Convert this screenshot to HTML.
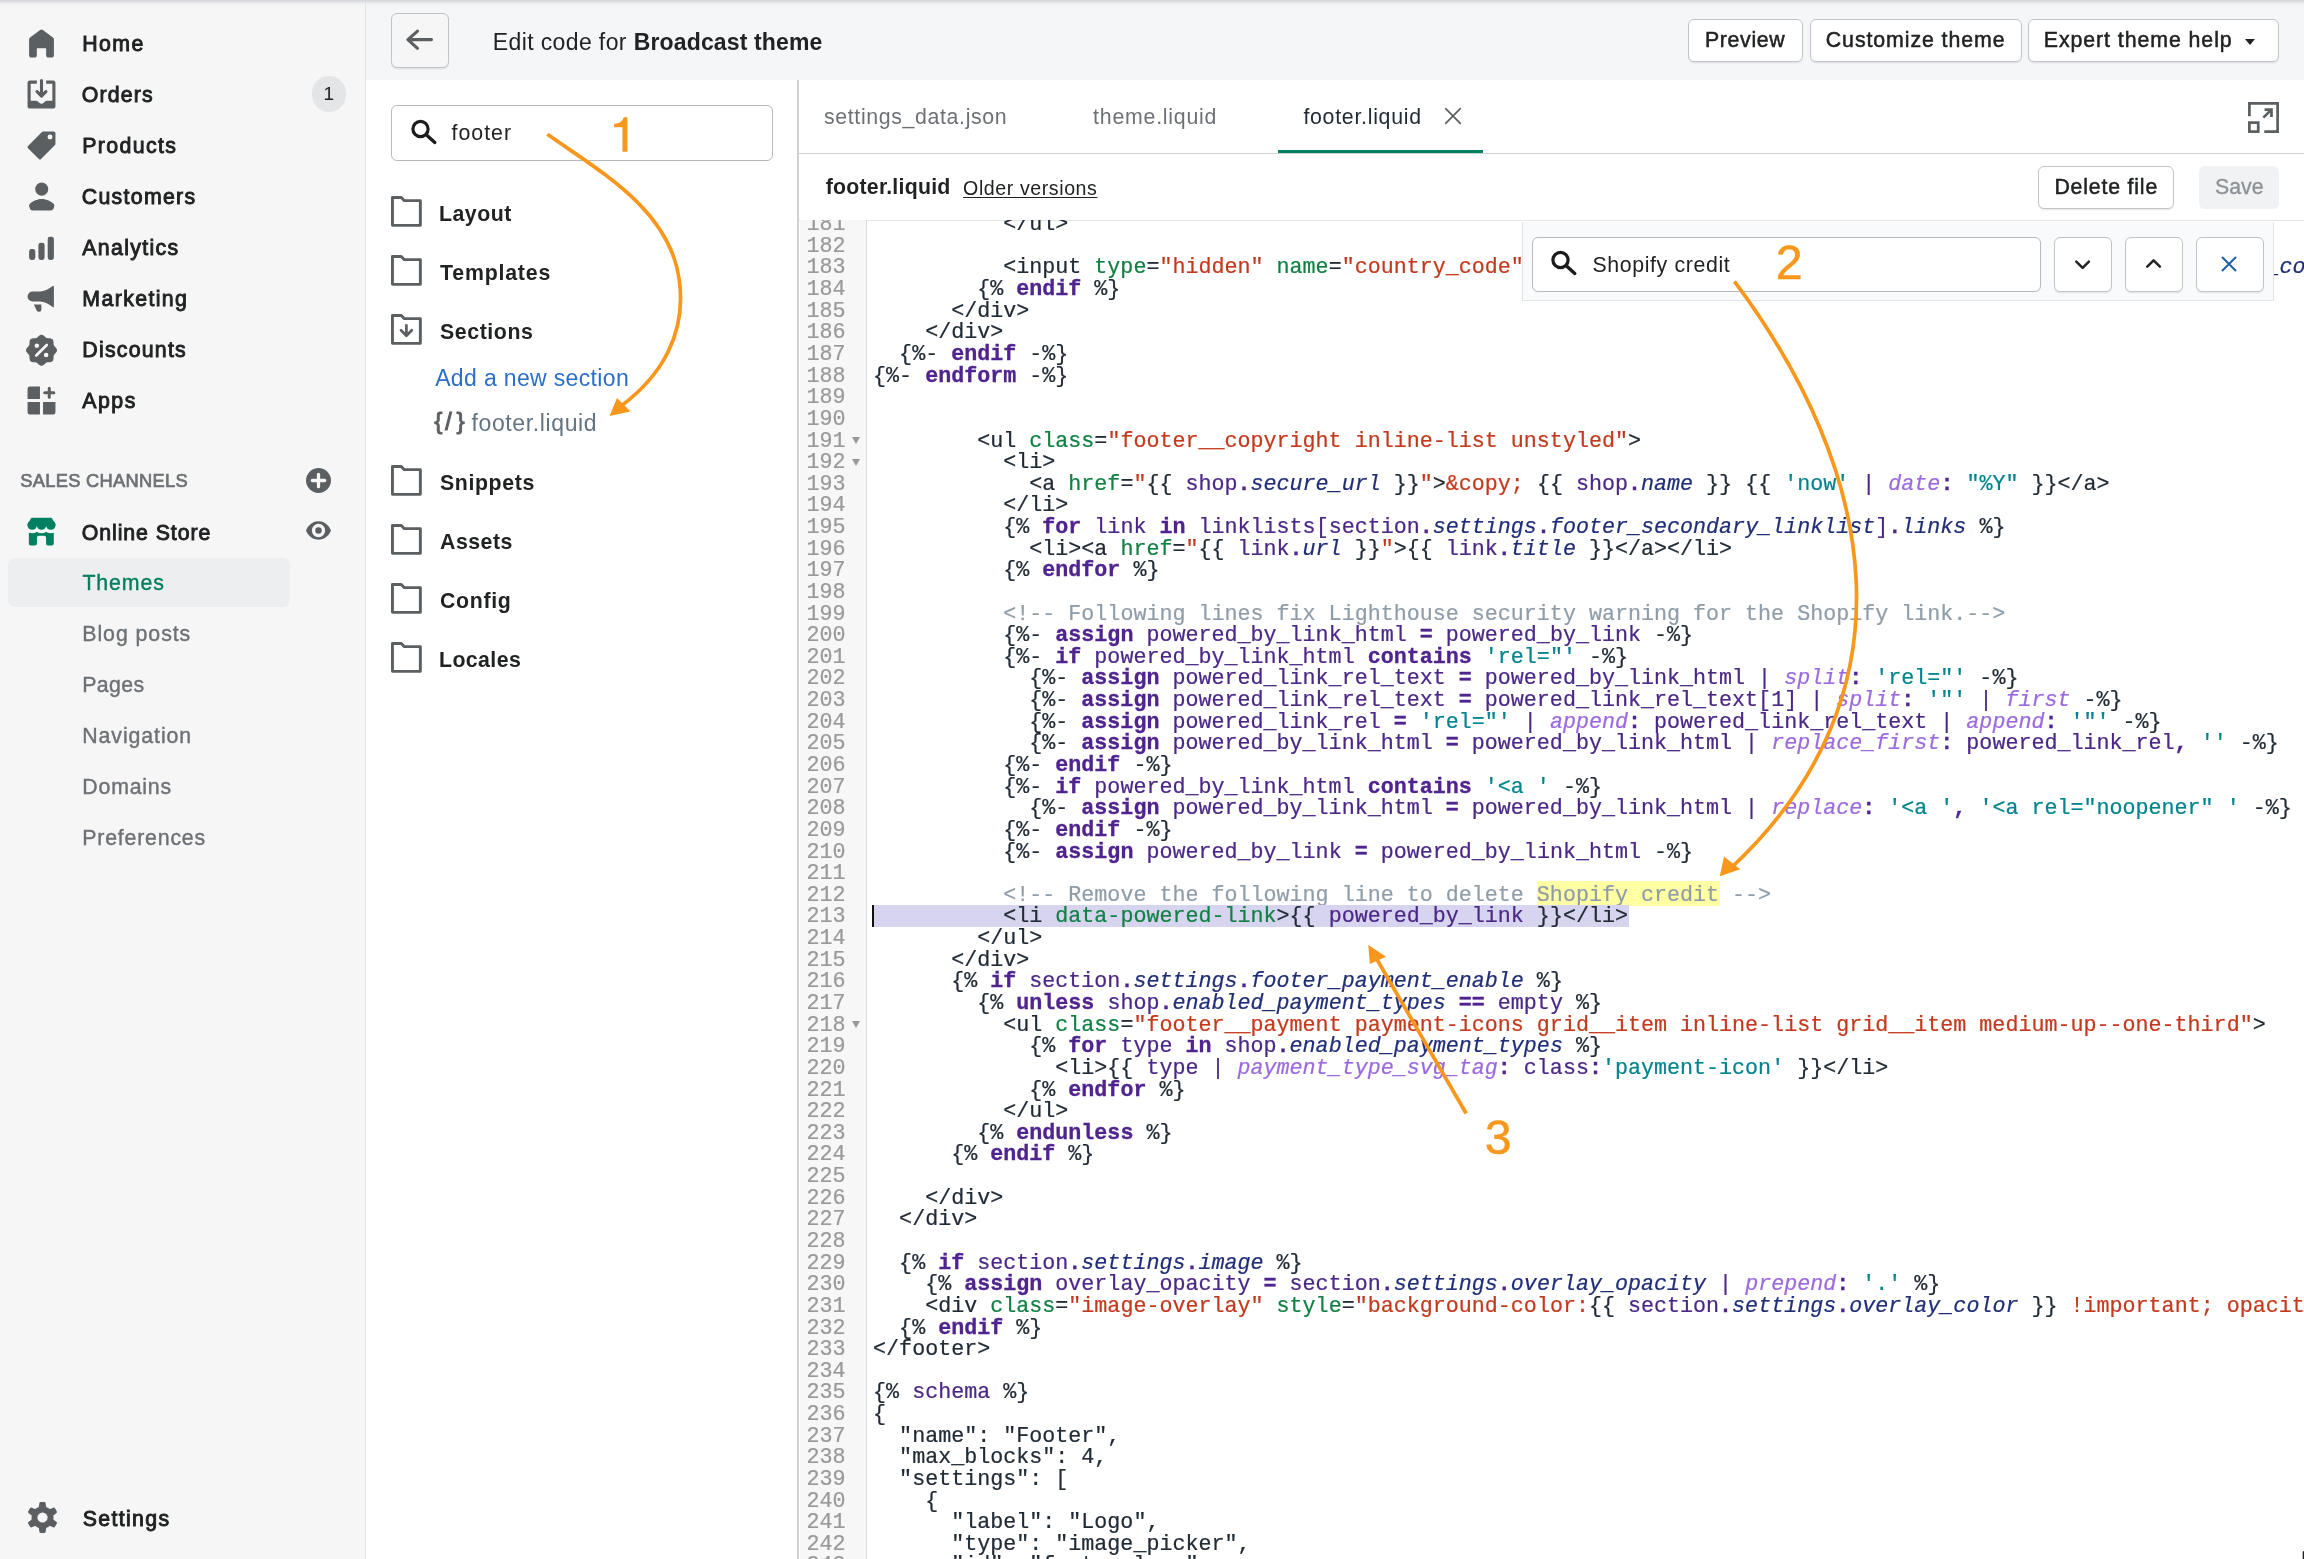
<!DOCTYPE html><html><head><meta charset="utf-8"><title>Edit code</title><style>
*{box-sizing:border-box;margin:0;padding:0}
html,body{width:2304px;height:1559px;overflow:hidden;background:#fff}
body{font-family:"Liberation Sans",sans-serif;color:#202223;position:relative}
#root{position:absolute;left:0;top:0;width:2304px;height:1559px;will-change:transform}
.abs{position:absolute}
.t{position:absolute;white-space:nowrap;line-height:1}
#nav{position:absolute;left:0;top:0;width:365px;height:1559px;background:#f6f6f7}
#navb{position:absolute;left:365px;top:0;width:1px;height:1559px;background:#e1e3e5}
.ic{position:absolute;left:26.3px;width:31px;height:31px}
#hdr{position:absolute;left:366px;top:0;width:1938px;height:80px;background:#f4f6f8}
#hdrs{position:absolute;left:0;top:0;width:2304px;height:5px;background:linear-gradient(#d3d4d7,rgba(222,223,226,.55) 55%,rgba(235,236,238,0))}
.btn{position:absolute;background:#fff;border:1.8px solid #c0c4c9;border-radius:6px;box-shadow:0 1.5px 0 rgba(0,0,0,.07)}
#fp{position:absolute;left:366px;top:80px;width:432px;height:1479px;background:#fff}
#fpb{position:absolute;left:797px;top:80px;width:1.5px;height:1479px;background:#cfd2d5}
.fo{position:absolute;left:391px;width:32px;height:32px}
#ed{position:absolute;left:799px;top:80px;width:1505px;height:1479px;background:#fff}
#gut{position:absolute;left:800px;top:220px;width:67px;height:1339px;background:#f7f7f7;border-right:1.5px solid #ddd}
#code{position:absolute;left:800px;top:220px;width:1504px;height:1339px;overflow:hidden;font-family:"Liberation Mono",monospace;font-size:21.7px;color:#212b36;-webkit-text-stroke:.22px}
.ln{position:absolute;left:0;height:21.6px;line-height:21.6px;white-space:pre}
.no{width:45.5px;text-align:right;color:#999}
.cl{left:73.1px}
#code i{font-style:normal}
#code i.k{color:#50248f;font-weight:bold;-webkit-text-stroke:.3px}
#code i.o{color:#50248f;font-weight:bold;-webkit-text-stroke:.3px}
#code i.p{color:#4b2787}
#code i.v{color:#4b2787}
#code i.r{color:#202e78;font-style:italic}
#code i.f{color:#9c6ade;font-style:italic}
#code i.s{color:#00848e}
#code i.n{color:#108043}
#code i.a{color:#c4391d}
#code i.c{color:#8f9da9}
#code i.m{background:none}
.fa{position:absolute;left:52.3px;width:0;height:0;border-left:4.2px solid transparent;border-right:4.2px solid transparent;border-top:7.6px solid #999}
</style></head><body><div id="root">
<div id="nav"></div><div id="navb"></div>
<div class="ic" style="top:27.6px"><svg viewBox="0 0 20 20" width="100%" height="100%" style="display:block;overflow:visible" ><path fill="#5c5f62" d="M18 7.26V17.5c0 .83-.67 1.5-1.5 1.5h-2c-.83 0-1.5-.67-1.5-1.5V13H7v4.5C7 18.33 6.33 19 5.5 19h-2C2.67 19 2 18.33 2 17.5V7.26c0-.48.23-.93.62-1.21l6.5-4.76a1.5 1.5 0 0 1 1.76 0l6.5 4.76c.39.28.62.73.62 1.21z"/></svg></div>
<div class="t" style="left:82.30px;top:33.87px;font-size:21.3px;letter-spacing:1.378px;color:#202223;-webkit-text-stroke:0.9px #202223;">Home</div>
<div class="ic" style="top:78.6px"><svg viewBox="0 0 20 20" width="100%" height="100%" style="display:block;overflow:visible" ><path fill="#5c5f62" d="M11 1a1 1 0 1 0-2 0v7.59L7.7 7.3a1 1 0 0 0-1.4 1.4l3 3a1 1 0 0 0 1.4 0l3-3a1 1 0 0 0-1.4-1.4L11 8.59V1z"/><path fill="#5c5f62" d="M3 14V3h4V1H2.5C1.67 1 1 1.67 1 2.5v15c0 .83.67 1.5 1.5 1.5h15c.83 0 1.5-.67 1.5-1.5v-15c0-.83-.67-1.5-1.5-1.5H13v2h4v11h-3.5c-.78 0-1.39.66-1.93 1.24l-.11.12c-.36.4-.88.64-1.46.64s-1.1-.25-1.46-.64l-.11-.12C7.89 14.66 7.28 14 6.5 14H3z"/></svg></div>
<div class="t" style="left:81.80px;top:84.87px;font-size:21.3px;letter-spacing:1.172px;color:#202223;-webkit-text-stroke:0.9px #202223;">Orders</div>
<div class="ic" style="top:129.6px"><svg viewBox="0 0 20 20" width="100%" height="100%" style="display:block;overflow:visible" ><path fill="#5c5f62" fill-rule="evenodd" d="M10.3 1.3A1 1 0 0 1 11 1h7a1 1 0 0 1 1 1v7a1 1 0 0 1-.3.7l-9 9a1 1 0 0 1-1.4 0l-7-7a1 1 0 0 1 0-1.4l9-9zM15.5 6.1a1.6 1.6 0 1 0 0-3.2 1.6 1.6 0 0 0 0 3.2z"/></svg></div>
<div class="t" style="left:82.30px;top:135.87px;font-size:21.3px;letter-spacing:1.372px;color:#202223;-webkit-text-stroke:0.9px #202223;">Products</div>
<div class="ic" style="top:180.6px"><svg viewBox="0 0 20 20" width="100%" height="100%" style="display:block;overflow:visible" ><path fill="#5c5f62" d="M14.36 5.22a4.22 4.22 0 1 1-8.44 0 4.22 4.22 0 0 1 8.44 0zM2.67 14.47c1.39-1.09 4.14-2.85 7.47-2.85s6.09 1.76 7.47 2.85c.62.49.81 1.31.57 2.06l-.33 1.02A2.11 2.11 0 0 1 15.85 19H4.44c-.91 0-1.72-.59-2-1.45l-.34-1.02c-.24-.75-.05-1.57.57-2.06z"/></svg></div>
<div class="t" style="left:81.80px;top:186.87px;font-size:21.3px;letter-spacing:1.299px;color:#202223;-webkit-text-stroke:0.9px #202223;">Customers</div>
<div class="ic" style="top:231.6px"><svg viewBox="0 0 20 20" width="100%" height="100%" style="display:block;overflow:visible" ><path fill="#5c5f62" d="M15.5 3A1.5 1.5 0 0 0 14 4.5v12a1.5 1.5 0 0 0 1.5 1.5h1a1.5 1.5 0 0 0 1.5-1.5v-12A1.5 1.5 0 0 0 16.5 3h-1zM8 8.5A1.5 1.5 0 0 1 9.5 7h1A1.5 1.5 0 0 1 12 8.500v8a1.5 1.5 0 0 1-1.5 1.5h-1A1.5 1.5 0 0 1 8 16.5v-8zm-6 4A1.5 1.500 0 0 1 3.500 11h1A1.5 1.5 0 0 1 6 12.5v4A1.5 1.5 0 0 1 4.500 18h-1A1.5 1.5 0 0 1 2 16.5v-4z"/></svg></div>
<div class="t" style="left:82.30px;top:237.87px;font-size:21.3px;letter-spacing:1.316px;color:#202223;-webkit-text-stroke:0.9px #202223;">Analytics</div>
<div class="ic" style="top:282.6px"><svg viewBox="0 0 20 20" width="100%" height="100%" style="display:block;overflow:visible" ><path fill="#5c5f62" d="M1 8.75A3.25 3.25 0 0 1 4.25 5.5H9.2c2.3 0 5.3-1.500 8-3.500.4-.3.8-.1.8.4v12.700c0 .5-.4.7-.8.4-2.700-2-5.700-3.500-8-3.500H4.250A3.250 3.250 0 0 1 1 8.750z"/><path fill="#5c5f62" d="M5.100 13.800h4.800v3.500a1.300 1.300 0 0 1-1.300 1.300h-.5a1.300 1.300 0 0 1-1.150-.7z"/></svg></div>
<div class="t" style="left:82.30px;top:288.87px;font-size:21.3px;letter-spacing:1.392px;color:#202223;-webkit-text-stroke:0.9px #202223;">Marketing</div>
<div class="ic" style="top:333.6px"><svg viewBox="0 0 20 20" width="100%" height="100%" style="display:block;overflow:visible" ><path fill="#5c5f62" d="M10.00,0.50 L10.39,0.54 L10.77,0.66 L11.14,0.86 L11.49,1.10 L11.81,1.38 L12.12,1.67 L12.41,1.95 L12.70,2.19 L12.99,2.40 L13.29,2.55 L13.61,2.66 L13.97,2.72 L14.34,2.74 L14.75,2.75 L15.17,2.77 L15.59,2.80 L16.01,2.87 L16.41,3.00 L16.76,3.18 L17.07,3.43 L17.32,3.74 L17.50,4.09 L17.63,4.49 L17.70,4.91 L17.73,5.33 L17.75,5.75 L17.76,6.16 L17.78,6.53 L17.84,6.89 L17.95,7.21 L18.10,7.51 L18.31,7.80 L18.55,8.09 L18.83,8.38 L19.12,8.69 L19.40,9.01 L19.64,9.36 L19.84,9.73 L19.96,10.11 L20.00,10.50 L19.96,10.89 L19.84,11.27 L19.64,11.64 L19.40,11.99 L19.12,12.31 L18.83,12.62 L18.55,12.91 L18.31,13.20 L18.10,13.49 L17.95,13.79 L17.84,14.11 L17.78,14.47 L17.76,14.84 L17.75,15.25 L17.73,15.67 L17.70,16.09 L17.63,16.51 L17.50,16.91 L17.32,17.26 L17.07,17.57 L16.76,17.82 L16.41,18.00 L16.01,18.13 L15.59,18.20 L15.17,18.23 L14.75,18.25 L14.34,18.26 L13.97,18.28 L13.61,18.34 L13.29,18.45 L12.99,18.60 L12.70,18.81 L12.41,19.05 L12.12,19.33 L11.81,19.62 L11.49,19.90 L11.14,20.14 L10.77,20.34 L10.39,20.46 L10.00,20.50 L9.61,20.46 L9.23,20.34 L8.86,20.14 L8.51,19.90 L8.19,19.62 L7.88,19.33 L7.59,19.05 L7.30,18.81 L7.01,18.60 L6.71,18.45 L6.39,18.34 L6.03,18.28 L5.66,18.26 L5.25,18.25 L4.83,18.23 L4.41,18.20 L3.99,18.13 L3.59,18.00 L3.24,17.82 L2.93,17.57 L2.68,17.26 L2.50,16.91 L2.37,16.51 L2.30,16.09 L2.27,15.67 L2.25,15.25 L2.24,14.84 L2.22,14.47 L2.16,14.11 L2.05,13.79 L1.90,13.49 L1.69,13.20 L1.45,12.91 L1.17,12.62 L0.88,12.31 L0.60,11.99 L0.36,11.64 L0.16,11.27 L0.04,10.89 L0.00,10.50 L0.04,10.11 L0.16,9.73 L0.36,9.36 L0.60,9.01 L0.88,8.69 L1.17,8.38 L1.45,8.09 L1.69,7.80 L1.90,7.51 L2.05,7.21 L2.16,6.89 L2.22,6.53 L2.24,6.16 L2.25,5.75 L2.27,5.33 L2.30,4.91 L2.37,4.49 L2.50,4.09 L2.68,3.74 L2.93,3.43 L3.24,3.18 L3.59,3.00 L3.99,2.87 L4.41,2.80 L4.83,2.77 L5.25,2.75 L5.66,2.74 L6.03,2.72 L6.39,2.66 L6.71,2.55 L7.01,2.40 L7.30,2.19 L7.59,1.95 L7.88,1.67 L8.19,1.38 L8.51,1.10 L8.86,0.86 L9.23,0.66 L9.61,0.54Z"/><path d="M6.600 13.900L13.400 7.100" stroke="#f6f6f7" stroke-width="1.700" stroke-linecap="round"/><circle cx="7" cy="7.500" r="1.450" fill="#f6f6f7"/><circle cx="13" cy="13.500" r="1.450" fill="#f6f6f7"/></svg></div>
<div class="t" style="left:82.30px;top:339.87px;font-size:21.3px;letter-spacing:1.243px;color:#202223;-webkit-text-stroke:0.9px #202223;">Discounts</div>
<div class="ic" style="top:384.9px"><svg viewBox="0 0 20 20" width="100%" height="100%" style="display:block;overflow:visible" ><path fill="#5c5f62" d="M2.500 1H9v8H1V2.500A1.500 1.500 0 0 1 2.500 1zM1 11h8v8H2.500A1.500 1.500 0 0 1 1 17.500zM11 11h8v6.500a1.500 1.500 0 0 1-1.500 1.500H11z"/><path d="M15 2.050v5.900M12.050 5h5.900" stroke="#5c5f62" stroke-width="1.950" stroke-linecap="round"/></svg></div>
<div class="t" style="left:82.30px;top:390.87px;font-size:21.3px;letter-spacing:1.502px;color:#202223;-webkit-text-stroke:0.9px #202223;">Apps</div>
<div class="abs" style="left:312px;top:76px;width:34px;height:36px;border-radius:17px;background:#e4e5e7"></div>
<div class="t" style="left:323.40px;top:84.42px;font-size:19px;color:#202223;">1</div>
<div class="t" style="left:20.20px;top:471.71px;font-size:18.3px;letter-spacing:0.301px;color:#6d7175;-webkit-text-stroke:0.7px #6d7175;">SALES CHANNELS</div>
<div class="abs" style="left:303px;top:465px;width:31px;height:31px"><svg viewBox="0 0 20 20" width="100%" height="100%" style="display:block;overflow:visible" ><circle cx="10" cy="10" r="8.050" fill="#5c5f62"/><path d="M10 6v8M6 10h8" stroke="#f6f6f7" stroke-width="2.100" stroke-linecap="round"/></svg></div>
<div class="ic" style="top:516.1px"><svg viewBox="0 0 20 20" width="100%" height="100%" style="display:block;overflow:visible" ><path fill="#008060" d="M1.830 8H17.920V17.700a1.300 1.300 0 0 1-1.300 1.300H14.200a1.250 1.250 0 0 1-1.250-1.250V14.100a1.350 1.350 0 0 0-1.350-1.350H8.400a1.350 1.350 0 0 0-1.350 1.350V17.750a1.250 1.250 0 0 1-1.250 1.250H3.130a1.300 1.300 0 0 1-1.300-1.300Z"/><g fill="#f6f6f7"><circle cx="4" cy="5.830" r="5.370"/><circle cx="10" cy="5.830" r="5.370"/><circle cx="16" cy="5.830" r="5.370"/></g><path fill="#008060" d="M3.900 1.100H16.100q.5 0 .750.450L19.100 5.830H.900L3.150 1.550Q3.400 1.100 3.900 1.100z"/><g fill="#008060"><circle cx="4" cy="5.830" r="3.100"/><circle cx="10" cy="5.830" r="3.100"/><circle cx="16" cy="5.830" r="3.100"/></g></svg></div>
<div class="t" style="left:81.80px;top:522.57px;font-size:21.3px;letter-spacing:0.915px;color:#202223;-webkit-text-stroke:0.9px #202223;">Online Store</div>
<div class="abs" style="left:303px;top:514.5px;width:31px;height:31px"><svg viewBox="0 0 20 20" width="100%" height="100%" style="display:block;overflow:visible" ><path fill="#5c5f62" fill-rule="evenodd" d="M17.930 9.630C17.840 9.400 15.610 4 10 4S2.160 9.400 2.070 9.630a1 1 0 0 0 0 .74C2.160 10.600 4.390 16 10 16s7.840-5.400 7.930-5.630a1 1 0 0 0 0-.74zM10 14.300a4.300 4.300 0 1 1 0-8.600 4.300 4.300 0 0 1 0 8.600zM10 7.900a2.100 2.100 0 1 0 0 4.200 2.100 2.100 0 0 0 0-4.200z"/></svg></div>
<div class="abs" style="left:8px;top:558px;width:282px;height:49px;border-radius:7px;background:#edeeef"></div>
<div class="t" style="left:82.40px;top:573.37px;font-size:21.3px;letter-spacing:0.904px;color:#007f5f;-webkit-text-stroke:0.4px #007f5f;">Themes</div>
<div class="t" style="left:82.30px;top:624.37px;font-size:21.3px;letter-spacing:0.945px;color:#6d7175;-webkit-text-stroke:0.4px #6d7175;">Blog posts</div>
<div class="t" style="left:82.30px;top:675.37px;font-size:21.3px;letter-spacing:0.341px;color:#6d7175;-webkit-text-stroke:0.4px #6d7175;">Pages</div>
<div class="t" style="left:82.30px;top:726.37px;font-size:21.3px;letter-spacing:0.913px;color:#6d7175;-webkit-text-stroke:0.4px #6d7175;">Navigation</div>
<div class="t" style="left:82.30px;top:777.37px;font-size:21.3px;letter-spacing:0.803px;color:#6d7175;-webkit-text-stroke:0.4px #6d7175;">Domains</div>
<div class="t" style="left:82.30px;top:828.37px;font-size:21.3px;letter-spacing:0.802px;color:#6d7175;-webkit-text-stroke:0.4px #6d7175;">Preferences</div>
<div class="ic" style="top:1502px;left:26.8px"><svg viewBox="0 0 20 20" width="100%" height="100%" style="display:block;overflow:visible" ><circle cx="10" cy="10" r="7.1" fill="#5c5f62"/><path transform="rotate(0 10 10)" d="M7.95 .9Q8 .05 8.85 .05H11.15Q12 .05 12.05 .9L12.6 5H7.4Z" fill="#5c5f62"/><path transform="rotate(60 10 10)" d="M7.95 .9Q8 .05 8.85 .05H11.15Q12 .05 12.05 .9L12.6 5H7.4Z" fill="#5c5f62"/><path transform="rotate(120 10 10)" d="M7.95 .9Q8 .05 8.85 .05H11.15Q12 .05 12.05 .9L12.6 5H7.4Z" fill="#5c5f62"/><path transform="rotate(180 10 10)" d="M7.95 .9Q8 .05 8.85 .05H11.15Q12 .05 12.05 .9L12.6 5H7.4Z" fill="#5c5f62"/><path transform="rotate(240 10 10)" d="M7.95 .9Q8 .05 8.85 .05H11.15Q12 .05 12.05 .9L12.6 5H7.4Z" fill="#5c5f62"/><path transform="rotate(300 10 10)" d="M7.95 .9Q8 .05 8.85 .05H11.15Q12 .05 12.05 .9L12.6 5H7.4Z" fill="#5c5f62"/><circle cx="10" cy="10" r="3.3" fill="#f6f6f7"/></svg></div>
<div class="t" style="left:82.70px;top:1508.57px;font-size:21.3px;letter-spacing:1.342px;color:#202223;-webkit-text-stroke:0.9px #202223;">Settings</div>
<div id="hdr"></div>
<div class="btn" style="left:391px;top:13px;width:58px;height:55px;background:#f6f6f7"><svg width="58" height="55" viewBox="0 0 58 55" style="display:block;overflow:visible"><path d="M17.400 27.100H41M27 18.600L17.400 27.100L27 35.800" fill="none" stroke="#5c5f62" stroke-width="3.100" stroke-linecap="round" stroke-linejoin="round" transform="translate(-1.500 -1.500)"/></svg></div>
<div class="t" style="left:492.80px;top:30.83px;font-size:23px;letter-spacing:0.378px;color:#202223;">Edit code for</div>
<div class="t" style="left:633.70px;top:30.83px;font-size:23px;font-weight:bold;letter-spacing:0.148px;color:#202223;">Broadcast theme</div>
<div class="btn" style="left:1688px;top:19px;width:115px;height:43px"></div>
<div class="t" style="left:1705.00px;top:30.37px;font-size:21.3px;letter-spacing:0.656px;color:#202223;-webkit-text-stroke:0.5px #202223;">Preview</div>
<div class="btn" style="left:1810px;top:19px;width:212px;height:43px"></div>
<div class="t" style="left:1825.80px;top:30.37px;font-size:21.3px;letter-spacing:0.931px;color:#202223;-webkit-text-stroke:0.5px #202223;">Customize theme</div>
<div class="btn" style="left:2028px;top:19px;width:251px;height:43px"></div>
<div class="t" style="left:2043.80px;top:30.37px;font-size:21.3px;letter-spacing:0.938px;color:#202223;-webkit-text-stroke:0.5px #202223;">Expert theme help</div>
<div class="abs" style="left:2244.5px;top:38.5px;width:0;height:0;border-left:5.2px solid transparent;border-right:5.2px solid transparent;border-top:6.2px solid #202223"></div>
<div id="fp"></div><div id="fpb"></div>
<div class="abs" style="left:391px;top:105px;width:382px;height:56px;border:1.5px solid #b5babf;border-radius:6px;background:#fff"></div>
<div class="abs" style="left:405px;top:114px;width:36px;height:36px"><svg width="36" height="36" viewBox="0 0 36 36" style="display:block;overflow:visible"><circle cx="15.500" cy="15" r="7.600" fill="none" stroke="#1a1c1d" stroke-width="3.200"/><path d="M21.500 21L29.800 28.400" stroke="#1a1c1d" stroke-width="3.400" stroke-linecap="round"/></svg></div>
<div class="t" style="left:451.60px;top:123.37px;font-size:21.3px;letter-spacing:0.987px;color:#202223;">footer</div>
<div class="fo" style="top:196.2px"><svg width="32" height="32" viewBox="0 0 32 32" style="display:block;overflow:visible"><path d="M1.450 1.450H10.300L13.300 4.650H29.350V29.350H1.450Z" fill="none" stroke="#5c5f62" stroke-width="2.900" stroke-linejoin="round"/></svg></div>
<div class="t" style="left:439.00px;top:204.17px;font-size:21.3px;font-weight:bold;letter-spacing:0.497px;color:#202223;">Layout</div>
<div class="fo" style="top:255px"><svg width="32" height="32" viewBox="0 0 32 32" style="display:block;overflow:visible"><path d="M1.450 1.450H10.300L13.300 4.650H29.350V29.350H1.450Z" fill="none" stroke="#5c5f62" stroke-width="2.900" stroke-linejoin="round"/></svg></div>
<div class="t" style="left:440.00px;top:262.97px;font-size:21.3px;font-weight:bold;letter-spacing:0.811px;color:#202223;">Templates</div>
<div class="fo" style="top:313.8px"><svg width="32" height="32" viewBox="0 0 32 32" style="display:block;overflow:visible"><path d="M1.450 1.450H10.300L13.300 4.650H29.350V29.350H1.450Z" fill="none" stroke="#5c5f62" stroke-width="2.900" stroke-linejoin="round"/><path d="M15.400 11.300V21.300M10 16.300L15.400 21.700L20.800 16.300" fill="none" stroke="#5c5f62" stroke-width="2.700" stroke-linecap="round" stroke-linejoin="round"/></svg></div>
<div class="t" style="left:440.00px;top:321.77px;font-size:21.3px;font-weight:bold;letter-spacing:0.583px;color:#202223;">Sections</div>
<div class="fo" style="top:465.2px"><svg width="32" height="32" viewBox="0 0 32 32" style="display:block;overflow:visible"><path d="M1.450 1.450H10.300L13.300 4.650H29.350V29.350H1.450Z" fill="none" stroke="#5c5f62" stroke-width="2.900" stroke-linejoin="round"/></svg></div>
<div class="t" style="left:440.00px;top:473.17px;font-size:21.3px;font-weight:bold;letter-spacing:0.616px;color:#202223;">Snippets</div>
<div class="fo" style="top:524px"><svg width="32" height="32" viewBox="0 0 32 32" style="display:block;overflow:visible"><path d="M1.450 1.450H10.300L13.300 4.650H29.350V29.350H1.450Z" fill="none" stroke="#5c5f62" stroke-width="2.900" stroke-linejoin="round"/></svg></div>
<div class="t" style="left:440.00px;top:531.97px;font-size:21.3px;font-weight:bold;letter-spacing:0.499px;color:#202223;">Assets</div>
<div class="fo" style="top:582.8px"><svg width="32" height="32" viewBox="0 0 32 32" style="display:block;overflow:visible"><path d="M1.450 1.450H10.300L13.300 4.650H29.350V29.350H1.450Z" fill="none" stroke="#5c5f62" stroke-width="2.900" stroke-linejoin="round"/></svg></div>
<div class="t" style="left:440.00px;top:590.77px;font-size:21.3px;font-weight:bold;letter-spacing:0.679px;color:#202223;">Config</div>
<div class="fo" style="top:641.6px"><svg width="32" height="32" viewBox="0 0 32 32" style="display:block;overflow:visible"><path d="M1.450 1.450H10.300L13.300 4.650H29.350V29.350H1.450Z" fill="none" stroke="#5c5f62" stroke-width="2.900" stroke-linejoin="round"/></svg></div>
<div class="t" style="left:439.00px;top:649.57px;font-size:21.3px;font-weight:bold;letter-spacing:0.405px;color:#202223;">Locales</div>
<div class="t" style="left:435.20px;top:366.63px;font-size:23px;letter-spacing:0.346px;color:#2c6ecb;">Add a new section</div>
<div class="t" style="left:434.20px;top:408.56px;font-size:24.5px;color:#5c5f62;-webkit-text-stroke:0.9px #5c5f62;">{</div>
<div class="t" style="left:445.30px;top:410.73px;font-size:23px;color:#5c5f62;-webkit-text-stroke:1.1px #5c5f62;">/</div>
<div class="t" style="left:456.50px;top:408.56px;font-size:24.5px;color:#5c5f62;-webkit-text-stroke:0.9px #5c5f62;">}</div>
<div class="t" style="left:471.50px;top:411.93px;font-size:23px;letter-spacing:0.621px;color:#637381;">footer.liquid</div>
<div id="ed"></div>
<div class="t" style="left:824.00px;top:107.17px;font-size:21.3px;letter-spacing:0.645px;color:#6d7175;">settings_data.json</div>
<div class="t" style="left:1093.10px;top:107.17px;font-size:21.3px;letter-spacing:0.774px;color:#6d7175;">theme.liquid</div>
<div class="t" style="left:1303.40px;top:107.17px;font-size:21.3px;letter-spacing:0.726px;color:#212b36;">footer.liquid</div>
<div class="abs" style="left:1443.7px;top:107px;width:18px;height:18px"><svg width="18" height="18" viewBox="0 0 18 18" style="display:block;overflow:visible"><path d="M1.700 1.700L16.300 16.300M16.300 1.700L1.700 16.300" stroke="#5c5f62" stroke-width="1.700" stroke-linecap="round"/></svg></div>
<div class="abs" style="left:799px;top:153.1px;width:1505px;height:1px;background:#cfd2d5"></div>
<div class="abs" style="left:1278px;top:149.6px;width:204.6px;height:3.6px;background:#008060"></div>
<div class="abs" style="left:2248px;top:102px;width:31px;height:31px"><svg viewBox="0 0 20 20" width="100%" height="100%" style="display:block;overflow:visible" ><path d="M.9 9.200V.9H19.100V19.100H10.500" fill="none" stroke="#5c5f62" stroke-width="1.750"/><rect x=".9" y="13.300" width="5.700" height="5.800" fill="none" stroke="#5c5f62" stroke-width="1.750"/><path d="M9.900 10.100L15.100 4.900M10.700 4.900H15.150V9.600" fill="none" stroke="#5c5f62" stroke-width="1.750"/></svg></div>
<div class="t" style="left:825.70px;top:177.17px;font-size:21.3px;font-weight:bold;letter-spacing:0.230px;color:#202223;">footer.liquid</div>
<div class="t" style="left:963.10px;top:178.61px;font-size:19.6px;letter-spacing:0.575px;color:#202223;text-decoration:underline;text-underline-offset:2.3px;text-decoration-thickness:1.3px;">Older versions</div>
<div class="btn" style="left:2038px;top:166px;width:136px;height:43px"></div>
<div class="t" style="left:2054.40px;top:177.07px;font-size:21.3px;letter-spacing:0.814px;color:#202223;-webkit-text-stroke:0.5px #202223;">Delete file</div>
<div class="abs" style="left:2199px;top:165.5px;width:80px;height:43px;border-radius:6px;background:#f1f2f3"></div>
<div class="t" style="left:2215.00px;top:177.07px;font-size:21.3px;letter-spacing:0.034px;color:#8c9196;-webkit-text-stroke:0.3px #8c9196;">Save</div>
<div class="abs" style="left:799px;top:219.5px;width:1505px;height:1px;background:#e1e3e5"></div>
<div id="gut"></div><div id="code">
<div class="ln no" style="top:-5.83px">181</div>
<div class="ln cl" style="top:-5.83px">          &lt;/ul&gt;</div>
<div class="ln no" style="top:15.804px">182</div>
<div class="ln no" style="top:37.438px">183</div>
<div class="ln cl" style="top:37.438px">          &lt;input <i class="n">type</i>=<i class="a">"hidden"</i> <i class="n">name</i>=<i class="a">"country_code"</i></div>
<div class="ln no" style="top:59.072px">184</div>
<div class="ln cl" style="top:59.072px">        {% <i class="k">endif</i> %}</div>
<div class="ln no" style="top:80.706px">185</div>
<div class="ln cl" style="top:80.706px">      &lt;/div&gt;</div>
<div class="ln no" style="top:102.34px">186</div>
<div class="ln cl" style="top:102.34px">    &lt;/div&gt;</div>
<div class="ln no" style="top:123.974px">187</div>
<div class="ln cl" style="top:123.974px">  {%- <i class="k">endif</i> -%}</div>
<div class="ln no" style="top:145.608px">188</div>
<div class="ln cl" style="top:145.608px">{%- <i class="k">endform</i> -%}</div>
<div class="ln no" style="top:167.242px">189</div>
<div class="ln no" style="top:188.876px">190</div>
<div class="ln no" style="top:210.51px">191</div>
<div class="fa" style="top:217.21px"></div>
<div class="ln cl" style="top:210.51px">        &lt;ul <i class="n">class</i>=<i class="a">"footer__copyright inline-list unstyled"</i>&gt;</div>
<div class="ln no" style="top:232.144px">192</div>
<div class="fa" style="top:238.844px"></div>
<div class="ln cl" style="top:232.144px">          &lt;li&gt;</div>
<div class="ln no" style="top:253.778px">193</div>
<div class="ln cl" style="top:253.778px">            &lt;a <i class="n">href</i>=<i class="a">"</i>{{ <i class="v">shop</i><i class="o">.</i><i class="r">secure_url</i> }}<i class="a">"</i>&gt;<i class="a">&amp;copy;</i> {{ <i class="v">shop</i><i class="o">.</i><i class="r">name</i> }} {{ <i class="s">'now'</i> <i class="p">|</i> <i class="f">date</i><i class="o">:</i> <i class="s">"%Y"</i> }}&lt;/a&gt;</div>
<div class="ln no" style="top:275.412px">194</div>
<div class="ln cl" style="top:275.412px">          &lt;/li&gt;</div>
<div class="ln no" style="top:297.046px">195</div>
<div class="ln cl" style="top:297.046px">          {% <i class="k">for</i> <i class="v">link</i> <i class="k">in</i> <i class="v">linklists</i><i class="v">[</i><i class="v">section</i><i class="o">.</i><i class="r">settings</i><i class="o">.</i><i class="r">footer_secondary_linklist</i><i class="v">]</i><i class="o">.</i><i class="r">links</i> %}</div>
<div class="ln no" style="top:318.68px">196</div>
<div class="ln cl" style="top:318.68px">            &lt;li&gt;&lt;a <i class="n">href</i>=<i class="a">"</i>{{ <i class="v">link</i><i class="o">.</i><i class="r">url</i> }}<i class="a">"</i>&gt;{{ <i class="v">link</i><i class="o">.</i><i class="r">title</i> }}&lt;/a&gt;&lt;/li&gt;</div>
<div class="ln no" style="top:340.314px">197</div>
<div class="ln cl" style="top:340.314px">          {% <i class="k">endfor</i> %}</div>
<div class="ln no" style="top:361.948px">198</div>
<div class="ln no" style="top:383.582px">199</div>
<div class="ln cl" style="top:383.582px">          <i class="c">&lt;!-- Following lines fix Lighthouse security warning for the Shopify link.--&gt;</i></div>
<div class="ln no" style="top:405.216px">200</div>
<div class="ln cl" style="top:405.216px">          {%- <i class="k">assign</i> <i class="v">powered_by_link_html</i> <i class="o">=</i> <i class="v">powered_by_link</i> -%}</div>
<div class="ln no" style="top:426.85px">201</div>
<div class="ln cl" style="top:426.85px">          {%- <i class="k">if</i> <i class="v">powered_by_link_html</i> <i class="k">contains</i> <i class="s">'rel="'</i> -%}</div>
<div class="ln no" style="top:448.484px">202</div>
<div class="ln cl" style="top:448.484px">            {%- <i class="k">assign</i> <i class="v">powered_link_rel_text</i> <i class="o">=</i> <i class="v">powered_by_link_html</i> <i class="p">|</i> <i class="f">split</i><i class="o">:</i> <i class="s">'rel="'</i> -%}</div>
<div class="ln no" style="top:470.118px">203</div>
<div class="ln cl" style="top:470.118px">            {%- <i class="k">assign</i> <i class="v">powered_link_rel_text</i> <i class="o">=</i> <i class="v">powered_link_rel_text</i><i class="v">[</i><i class="v">1</i><i class="v">]</i> <i class="p">|</i> <i class="f">split</i><i class="o">:</i> <i class="s">'"'</i> <i class="p">|</i> <i class="f">first</i> -%}</div>
<div class="ln no" style="top:491.752px">204</div>
<div class="ln cl" style="top:491.752px">            {%- <i class="k">assign</i> <i class="v">powered_link_rel</i> <i class="o">=</i> <i class="s">'rel="'</i> <i class="p">|</i> <i class="f">append</i><i class="o">:</i> <i class="v">powered_link_rel_text</i> <i class="p">|</i> <i class="f">append</i><i class="o">:</i> <i class="s">'"'</i> -%}</div>
<div class="ln no" style="top:513.386px">205</div>
<div class="ln cl" style="top:513.386px">            {%- <i class="k">assign</i> <i class="v">powered_by_link_html</i> <i class="o">=</i> <i class="v">powered_by_link_html</i> <i class="p">|</i> <i class="f">replace_first</i><i class="o">:</i> <i class="v">powered_link_rel</i><i class="o">,</i> <i class="s">''</i> -%}</div>
<div class="ln no" style="top:535.02px">206</div>
<div class="ln cl" style="top:535.02px">          {%- <i class="k">endif</i> -%}</div>
<div class="ln no" style="top:556.654px">207</div>
<div class="ln cl" style="top:556.654px">          {%- <i class="k">if</i> <i class="v">powered_by_link_html</i> <i class="k">contains</i> <i class="s">'&lt;a '</i> -%}</div>
<div class="ln no" style="top:578.288px">208</div>
<div class="ln cl" style="top:578.288px">            {%- <i class="k">assign</i> <i class="v">powered_by_link_html</i> <i class="o">=</i> <i class="v">powered_by_link_html</i> <i class="p">|</i> <i class="f">replace</i><i class="o">:</i> <i class="s">'&lt;a '</i><i class="o">,</i> <i class="s">'&lt;a rel="noopener" '</i> -%}</div>
<div class="ln no" style="top:599.922px">209</div>
<div class="ln cl" style="top:599.922px">          {%- <i class="k">endif</i> -%}</div>
<div class="ln no" style="top:621.556px">210</div>
<div class="ln cl" style="top:621.556px">          {%- <i class="k">assign</i> <i class="v">powered_by_link</i> <i class="o">=</i> <i class="v">powered_by_link_html</i> -%}</div>
<div class="ln no" style="top:643.19px">211</div>
<div class="abs" style="left:737.4px;top:661px;width:182.6px;height:24.6px;background:#ffffa3"></div>
<div class="ln no" style="top:664.824px">212</div>
<div class="ln cl" style="top:664.824px">          <i class="c">&lt;!-- Remove the following line to delete </i><i class="c m">Shopify credit</i><i class="c"> --&gt;</i></div>
<div class="abs" style="left:73px;top:685.358px;width:756px;height:21.2px;background:#d7d4f0"></div>
<div class="abs" style="left:72.3px;top:685.358px;width:2px;height:21.2px;background:#111"></div>
<div class="ln no" style="top:686.458px">213</div>
<div class="ln cl" style="top:686.458px">          &lt;li <i class="n">data-powered-link</i>&gt;{{ <i class="v">powered_by_link</i> }}&lt;/li&gt;</div>
<div class="ln no" style="top:708.092px">214</div>
<div class="ln cl" style="top:708.092px">        &lt;/ul&gt;</div>
<div class="ln no" style="top:729.726px">215</div>
<div class="ln cl" style="top:729.726px">      &lt;/div&gt;</div>
<div class="ln no" style="top:751.36px">216</div>
<div class="ln cl" style="top:751.36px">      {% <i class="k">if</i> <i class="v">section</i><i class="o">.</i><i class="r">settings</i><i class="o">.</i><i class="r">footer_payment_enable</i> %}</div>
<div class="ln no" style="top:772.994px">217</div>
<div class="ln cl" style="top:772.994px">        {% <i class="k">unless</i> <i class="v">shop</i><i class="o">.</i><i class="r">enabled_payment_types</i> <i class="o">==</i> <i class="v">empty</i> %}</div>
<div class="ln no" style="top:794.628px">218</div>
<div class="fa" style="top:801.328px"></div>
<div class="ln cl" style="top:794.628px">          &lt;ul <i class="n">class</i>=<i class="a">"footer__payment payment-icons grid__item inline-list grid__item medium-up--one-third"</i>&gt;</div>
<div class="ln no" style="top:816.262px">219</div>
<div class="ln cl" style="top:816.262px">            {% <i class="k">for</i> <i class="v">type</i> <i class="k">in</i> <i class="v">shop</i><i class="o">.</i><i class="r">enabled_payment_types</i> %}</div>
<div class="ln no" style="top:837.896px">220</div>
<div class="ln cl" style="top:837.896px">              &lt;li&gt;{{ <i class="v">type</i> <i class="p">|</i> <i class="f">payment_type_svg_tag</i><i class="o">:</i> <i class="v">class</i><i class="o">:</i><i class="s">'payment-icon'</i> }}&lt;/li&gt;</div>
<div class="ln no" style="top:859.53px">221</div>
<div class="ln cl" style="top:859.53px">            {% <i class="k">endfor</i> %}</div>
<div class="ln no" style="top:881.164px">222</div>
<div class="ln cl" style="top:881.164px">          &lt;/ul&gt;</div>
<div class="ln no" style="top:902.798px">223</div>
<div class="ln cl" style="top:902.798px">        {% <i class="k">endunless</i> %}</div>
<div class="ln no" style="top:924.432px">224</div>
<div class="ln cl" style="top:924.432px">      {% <i class="k">endif</i> %}</div>
<div class="ln no" style="top:946.066px">225</div>
<div class="ln no" style="top:967.7px">226</div>
<div class="ln cl" style="top:967.7px">    &lt;/div&gt;</div>
<div class="ln no" style="top:989.334px">227</div>
<div class="ln cl" style="top:989.334px">  &lt;/div&gt;</div>
<div class="ln no" style="top:1010.97px">228</div>
<div class="ln no" style="top:1032.6px">229</div>
<div class="ln cl" style="top:1032.6px">  {% <i class="k">if</i> <i class="v">section</i><i class="o">.</i><i class="r">settings</i><i class="o">.</i><i class="r">image</i> %}</div>
<div class="ln no" style="top:1054.24px">230</div>
<div class="ln cl" style="top:1054.24px">    {% <i class="k">assign</i> <i class="v">overlay_opacity</i> <i class="o">=</i> <i class="v">section</i><i class="o">.</i><i class="r">settings</i><i class="o">.</i><i class="r">overlay_opacity</i> <i class="p">|</i> <i class="f">prepend</i><i class="o">:</i> <i class="s">'.'</i> %}</div>
<div class="ln no" style="top:1075.87px">231</div>
<div class="ln cl" style="top:1075.87px">    &lt;div <i class="n">class</i>=<i class="a">"image-overlay"</i> <i class="n">style</i>=<i class="a">"background-color:</i>{{ <i class="v">section</i><i class="o">.</i><i class="r">settings</i><i class="o">.</i><i class="r">overlay_color</i> }}<i class="a"> !important; opacity: </i>{{ <i class="v">overlay_opacity</i> }}<i class="a">;"</i>&gt;&lt;/div&gt;</div>
<div class="ln no" style="top:1097.5px">232</div>
<div class="ln cl" style="top:1097.5px">  {% <i class="k">endif</i> %}</div>
<div class="ln no" style="top:1119.14px">233</div>
<div class="ln cl" style="top:1119.14px">&lt;/footer&gt;</div>
<div class="ln no" style="top:1140.77px">234</div>
<div class="ln no" style="top:1162.41px">235</div>
<div class="ln cl" style="top:1162.41px">{% <i class="v">schema</i> %}</div>
<div class="ln no" style="top:1184.04px">236</div>
<div class="ln cl" style="top:1184.04px">{</div>
<div class="ln no" style="top:1205.67px">237</div>
<div class="ln cl" style="top:1205.67px">  "name": "Footer",</div>
<div class="ln no" style="top:1227.31px">238</div>
<div class="ln cl" style="top:1227.31px">  "max_blocks": 4,</div>
<div class="ln no" style="top:1248.94px">239</div>
<div class="ln cl" style="top:1248.94px">  "settings": [</div>
<div class="ln no" style="top:1270.58px">240</div>
<div class="ln cl" style="top:1270.58px">    {</div>
<div class="ln no" style="top:1292.21px">241</div>
<div class="ln cl" style="top:1292.21px">      "label": "Logo",</div>
<div class="ln no" style="top:1313.84px">242</div>
<div class="ln cl" style="top:1313.84px">      "type": "image_picker",</div>
<div class="ln no" style="top:1335.48px">243</div>
<div class="ln cl" style="top:1335.48px">      "id": "footer_logo",</div>
<div class="ln" style="left:1466.5px;top:37.438px"><i class="r">_code</i></div>
</div>
<div class="abs" style="left:1522px;top:221.5px;width:751.5px;height:79px;background:#f9fafb;border:1.5px solid #e1e3e5;border-top:0"></div>
<div class="abs" style="left:1532px;top:237px;width:509px;height:55px;border:1.5px solid #b5babf;border-radius:6px;background:#fff"></div>
<div class="abs" style="left:1545px;top:245px;width:36px;height:36px"><svg width="36" height="36" viewBox="0 0 36 36" style="display:block;overflow:visible"><circle cx="15.500" cy="15" r="7.600" fill="none" stroke="#1a1c1d" stroke-width="3.200"/><path d="M21.500 21L29.800 28.400" stroke="#1a1c1d" stroke-width="3.400" stroke-linecap="round"/></svg></div>
<div class="t" style="left:1592.40px;top:255.07px;font-size:21.3px;letter-spacing:0.638px;color:#202223;">Shopify credit</div>
<div class="btn" style="left:2054px;top:237px;width:58px;height:55px"><div style="position:absolute;left:50%;top:50%;width:36px;height:36px;margin:-19px 0 0 -19px"><svg width="36" height="36" viewBox="0 0 36 36" style="display:block;overflow:visible"><path d="M12.300 15.600L18.600 21.800L24.900 15.600" fill="none" stroke="#202223" stroke-width="2.500" stroke-linecap="round" stroke-linejoin="round"/></svg></div></div>
<div class="btn" style="left:2125px;top:237px;width:58px;height:55px"><div style="position:absolute;left:50%;top:50%;width:36px;height:36px;margin:-19px 0 0 -19px"><svg width="36" height="36" viewBox="0 0 36 36" style="display:block;overflow:visible"><path d="M12.300 20.600L18.600 14.400L24.900 20.600" fill="none" stroke="#202223" stroke-width="2.500" stroke-linecap="round" stroke-linejoin="round"/></svg></div></div>
<div class="btn" style="left:2196px;top:237px;width:67.5px;height:55px"><div style="position:absolute;left:50%;top:50%;width:36px;height:36px;margin:-19px 0 0 -19px"><svg width="36" height="36" viewBox="0 0 36 36" style="display:block;overflow:visible"><path d="M11.500 11.500L24.500 24.500M24.500 11.500L11.500 24.500" stroke="#1f5fae" stroke-width="2" stroke-linecap="round"/></svg></div></div>
<svg width="2304" height="1559" viewBox="0 0 2304 1559" style="position:absolute;left:0;top:0;pointer-events:none">
<g fill="none" stroke="#f8971b" stroke-width="3.700" stroke-linecap="butt">
<path d="M547.400 134.300C599.900 171.500 670.700 210.100 679.400 281C686.300 333.300 661.900 375.600 621 406"/>
<path d="M1734.400 281.400C1875.800 470.300 1918.700 692.600 1731 868"/>
<path d="M1466.200 1113.500L1377 959.500"/>
</g>
<g fill="#f8971b">
<path d="M609.500 416L617 398L630.500 411.500Z"/>
<path d="M1719.800 876.300L1724 856.500L1740.200 869.300Z"/>
<path d="M1368.300 945L1386.200 956.800L1369.800 964Z"/>
<path d="M627.400 117.200V151.850H622.450V127.150H614.100V123.800C619.500 123.400 622.300 121.500 623.900 117.200Z"/>
</g>
<g fill="#f8971b" stroke="#f8971b" stroke-width=".5" font-family="Liberation Sans, sans-serif" font-size="48.300">
<text x="1775.700" y="278.700">2</text>
<text x="1484.700" y="1154">3</text>
</g>
</svg>
<div id="hdrs"></div>
<div class="abs" style="left:2302.2px;top:1550.5px;width:1.8px;height:8.5px;background:linear-gradient(to right,rgba(20,10,10,0),#1a1010 80%);border-radius:2px 0 0 0"></div>
</div></body></html>
